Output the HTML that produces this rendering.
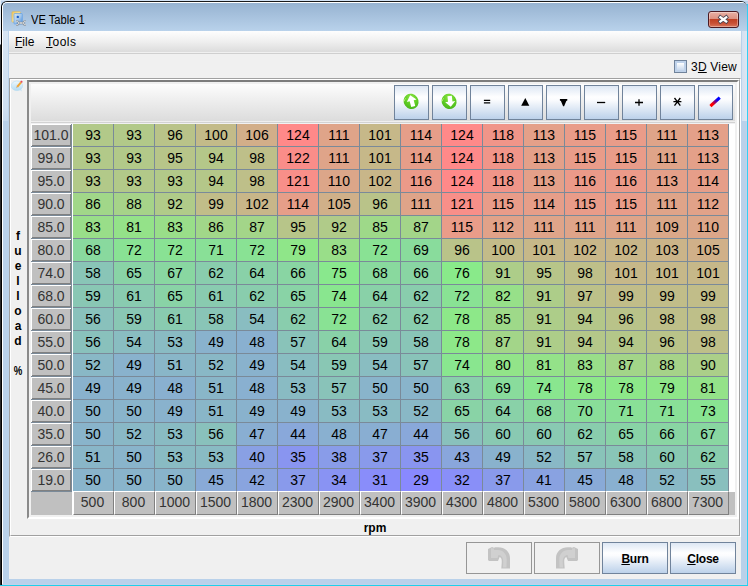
<!DOCTYPE html>
<html><head><meta charset="utf-8"><title>VE Table 1</title>
<style>
html,body{margin:0;padding:0}
body{width:748px;height:586px;overflow:hidden;position:relative;background:#b9d1ea;font-family:"Liberation Sans",sans-serif;font-size:12px;color:#000}
div,span,svg{position:absolute;box-sizing:border-box}
span.i{position:static}
/* outside strips */
#o-top{left:0;top:0;width:748px;height:1px;background:#d3e2f3}
#o-left{left:0;top:0;width:1px;height:586px;background:linear-gradient(#e8eef6 0,#e8eef6 44px,#2a2a2a 45px,#2a2a2a 100%)}
#o-right{left:747px;top:4px;width:1px;height:582px;background:#30d0f5}
#o-bot{left:0;top:585px;width:748px;height:1px;background:#1ed0ea}
/* window frame */
#win{left:1px;top:1px;width:746px;height:584px;border-left:1px solid #000;border-top:1px solid #1a1a1a;border-radius:6px 6px 0 0;background:#b9d1ea;overflow:hidden}
#title{left:0;top:0;width:746px;height:30px;background:linear-gradient(#97b3d1 0,#bad3ec 100%);border-left:1px solid #fff;border-top:1px solid #fff;border-radius:5px 5px 0 0}
#ttext{left:31px;top:12px;height:16px;line-height:16px;font-size:12px;white-space:nowrap;transform:scaleX(.93);transform-origin:0 0}
#xbtn{left:708px;top:11px;width:31px;height:17px;border:1px solid #4b1a22;border-radius:3px;background:linear-gradient(#e9b0a4 0,#dc9080 47%,#bf4024 50%,#c85035 75%,#d9755c 100%);box-shadow:inset 0 0 0 1px rgba(255,255,255,.35)}
/* client */
#client{left:9px;top:31px;width:732px;height:548px;background:#f0f0f0}
#menubar{left:9px;top:31px;width:732px;height:21px;background:linear-gradient(#fefefe 0,#efefef 50%,#dcdcdc 100%)}
#menuline{left:9px;top:53px;width:732px;height:1px;background:#cfcfcf}
.menu{top:34px;height:16px;line-height:16px;font-size:12px;white-space:nowrap}
u{text-decoration:underline;text-underline-offset:1px}
#cb{left:674px;top:60px;width:13px;height:13px;border:1px solid #70839b;background:#bfd2ea}
#cb i{position:absolute;left:2px;top:2px;width:7px;height:7px;background:linear-gradient(#fff 0,#f3f7fb 20%,#c9d9ed 100%)}
#cbl{left:691px;top:59px;letter-spacing:.2px;height:16px;line-height:16px;white-space:nowrap}
/* etched border */
#etch{left:9px;top:78px;width:732px;height:459px;border:1px solid #fff;border-top-color:#a0a0a0;border-left-color:#a0a0a0}
#etch2{left:10px;top:79px;width:730px;height:457px;border:1px solid #a0a0a0;border-top-color:#fff;border-left-color:#fff}
/* bevel */
#bevel{left:27px;top:80px;width:712px;height:439px;border-style:solid;border-width:2px;border-color:#7c7c7c #fff #fff #8a8a8a;background:#f0f0f0}
#inner{left:31px;top:84px;width:704px;height:431px;background:#fff}
#tb{left:31px;top:84px;width:704px;height:37px;background:linear-gradient(#fdfdfd 0,#ececec 50%,#dcdcdc 100%)}
#tb1{left:31px;top:121px;width:704px;height:1px;background:#efefef}
#tb2{left:31px;top:122px;width:704px;height:1px;background:#d2d2d2}
#tb3{left:31px;top:123px;width:704px;height:1px;background:#f1f1f3}
.tbtn{top:85px;width:35px;height:35px;border:1px solid #70839b;background:linear-gradient(#dde7f4 0,#fefeff 33%,#fbfcfe 42%,#bcd1ea 100%)}
.tbtn svg{left:0;top:0}
/* grid */
#grid{left:0;top:0;width:0;height:0}
.c{width:41px;height:23px;border-right:1px solid #7a8a99;border-bottom:1px solid #7a8a99;font-size:14px;line-height:22px;text-align:center;color:#000}
.rh{left:31px;width:41px;height:23px;background:#c0c0c0;border-right:1px solid #7a8a99;border-bottom:1px solid #7a8a99;box-shadow:inset 1px 1px 0 #fff,inset -1px -1px 0 #808080;font-size:14px;line-height:22px;text-align:center;color:#333}
.ch{top:491px;width:41px;height:24px;padding-right:2px;background:#c0c0c0;border:1px solid #808080;border-top-color:#fff;border-left-color:#fff;font-size:14px;line-height:21px;text-align:center;color:#333}
#corner{left:31px;top:492px;width:41px;height:23px;background:#c0c0c0}
#hdrbg{left:74px;top:492px;width:661px;height:23px;background:#c0c0c0}
#hdrtop{left:72px;top:491px;width:663px;height:1px;background:#fff}
#vlabel{left:10px;top:229px;width:16px;height:170px;writing-mode:vertical-rl;text-orientation:upright;font-weight:bold;font-size:12px;letter-spacing:1px;line-height:16px;white-space:pre}
#rpm{left:30px;top:520px;width:690px;height:16px;line-height:16px;text-align:center;font-weight:bold}
.bb{top:542px;width:66px;height:32px;border:1px solid #70839b;background:linear-gradient(#dde7f4 0,#fefeff 33%,#fbfcfe 42%,#bcd1ea 100%);text-align:center;font-weight:bold;line-height:32px;letter-spacing:-.2px}
.bbd{top:542px;width:66px;height:32px;border:1px solid #969696;background:#f0f0f0}
#hl-left{left:2px;top:6px;width:1px;height:579px;background:#fff}
#fr746{left:746px;top:31px;width:1px;height:554px;background:#c2d1ea}
#fb584{left:2px;top:584px;width:745px;height:1px;background:#c2d1ea}
#sh-l{left:3px;top:31px;width:5px;height:90px;background:linear-gradient(#d6e4f3 0,#cfdff0 85%,#c6d9ee 100%)}
#sh-r{left:742px;top:31px;width:5px;height:90px;background:linear-gradient(to right,#d3e1f2,#dde6f3)}

</style></head>
<body>
<div id="o-top"></div><div id="o-left"></div><div id="o-right"></div><div id="o-bot"></div>
<div id="win"><div id="title"></div></div><div id="hl-left"></div><div id="fr746"></div><div id="fb584"></div><div id="sh-l"></div><div id="sh-r"></div>
<svg id="ticon" style="left:11px;top:9px" width="17" height="18" viewBox="0 0 17 18">
 <defs><linearGradient id="ty" x1="0" y1="0" x2="1" y2="1"><stop offset="0" stop-color="#f1c85a"/><stop offset=".5" stop-color="#fbeab0"/><stop offset="1" stop-color="#f3d684"/></linearGradient>
 <linearGradient id="tb" x1="0" y1="0" x2="1" y2="1"><stop offset="0" stop-color="#d6e6f8"/><stop offset=".55" stop-color="#9cc4f0"/><stop offset="1" stop-color="#3f8ae0"/></linearGradient></defs>
 <rect x="1" y="2.8" width="8.3" height="10.2" rx=".6" fill="url(#ty)" stroke="#e3b84a" stroke-width=".7"/>
 <rect x="3" y="4.5" width="8.3" height="10.5" rx=".8" fill="url(#tb)" stroke="#5a9ce6" stroke-width=".7" opacity=".93"/>
 <circle cx="6.8" cy="7.9" r="1.2" fill="#1f5fc4"/>
<path d="M7.6 14h4.8" stroke="#868e97" stroke-width="2.5"/>
 <path d="M7.2 14h5.6" stroke="#e6e8ea" stroke-width="1.3"/>
 <path d="M5.3 12.3A1.8 1.8 0 1 1 5.3 15.7" fill="none" stroke="#7d858e" stroke-width="1.9"/>
 <path d="M5.3 12.3A1.8 1.8 0 1 1 5.3 15.7" fill="none" stroke="#eceef0" stroke-width=".9"/>
 <path d="M14.7 12.3A1.8 1.8 0 1 0 14.7 15.7" fill="none" stroke="#7d858e" stroke-width="1.9"/>
 <path d="M14.7 12.3A1.8 1.8 0 1 0 14.7 15.7" fill="none" stroke="#eceef0" stroke-width=".9"/>
</svg>
<div id="ttext">VE Table 1</div>
<div id="xbtn"><svg width="29" height="15" viewBox="0 0 29 15" style="left:0;top:0"><path d="M11.4 5.3l5.8 4.2M17.2 5.3l-5.8 4.2" stroke="#4a4452" stroke-width="3.9" stroke-linecap="square"/><path d="M11.4 5.3l5.8 4.2M17.2 5.3l-5.8 4.2" stroke="#fff" stroke-width="2.3" stroke-linecap="square"/></svg></div>
<div id="client"></div>
<div id="menubar"></div><div id="menuline"></div>
<div class="menu" style="left:15px"><u>F</u>ile</div>
<div class="menu" style="left:46px;letter-spacing:.5px"><u>T</u>ools</div>
<div id="cb"><i></i></div><div id="cbl">3<u>D</u> View</div>
<div id="etch"></div><div id="etch2"></div>
<svg id="nicon" style="left:11px;top:79px" width="15" height="15" viewBox="0 0 15 15">
 <defs><linearGradient id="nb" x1="0" y1="0" x2="0" y2="1"><stop offset="0" stop-color="#eef8fd"/><stop offset="1" stop-color="#b3dbf2"/></linearGradient></defs>
 <path d="M8.2 10.5l2.6 2-.6-2.6z" fill="#c5e3f5"/>
 <ellipse cx="5.9" cy="6.8" rx="5.7" ry="4.8" fill="url(#nb)" stroke="#b4dbf1" stroke-width=".6"/>
 <path d="M6.2 7.9l3.8-4.6" stroke="#f2a534" stroke-width="2.1"/>
 <path d="M5.4 8.9l.8-1" stroke="#b9b9b9" stroke-width="1.2"/>
 <path d="M10 3.3l1-1.2" stroke="#e8485a" stroke-width="2.1"/>
</svg>
<div id="bevel"></div><div id="inner"></div>
<div id="tb"></div><div id="tb1"></div><div id="tb2"></div><div id="tb3"></div>
<div id="corner"></div><div id="hdrbg"></div><div id="hdrtop"></div>
<div id="grid">
<div class="rh" style="top:124px">101.0</div>
<div class="rh" style="top:147px">99.0</div>
<div class="rh" style="top:170px">95.0</div>
<div class="rh" style="top:193px">90.0</div>
<div class="rh" style="top:216px">85.0</div>
<div class="rh" style="top:239px">80.0</div>
<div class="rh" style="top:262px">74.0</div>
<div class="rh" style="top:285px">68.0</div>
<div class="rh" style="top:308px">60.0</div>
<div class="rh" style="top:331px">55.0</div>
<div class="rh" style="top:354px">50.0</div>
<div class="rh" style="top:377px">45.0</div>
<div class="rh" style="top:400px">40.0</div>
<div class="rh" style="top:423px">35.0</div>
<div class="rh" style="top:446px">26.0</div>
<div class="rh" style="top:469px">19.0</div>
<div class="c" style="left:73px;top:124px;background:#b2c989">93</div>
<div class="c" style="left:114px;top:124px;background:#b2c989">93</div>
<div class="c" style="left:155px;top:124px;background:#b9c389">96</div>
<div class="c" style="left:196px;top:124px;background:#c3bb89">100</div>
<div class="c" style="left:237px;top:124px;background:#d2ae89">106</div>
<div class="c" style="left:278px;top:124px;background:#ff8989">124</div>
<div class="c" style="left:319px;top:124px;background:#dfa489">111</div>
<div class="c" style="left:360px;top:124px;background:#c6b889">101</div>
<div class="c" style="left:401px;top:124px;background:#e69e89">114</div>
<div class="c" style="left:442px;top:124px;background:#ff8989">124</div>
<div class="c" style="left:483px;top:124px;background:#f09589">118</div>
<div class="c" style="left:524px;top:124px;background:#e4a089">113</div>
<div class="c" style="left:565px;top:124px;background:#e99c89">115</div>
<div class="c" style="left:606px;top:124px;background:#e99c89">115</div>
<div class="c" style="left:647px;top:124px;background:#dfa489">111</div>
<div class="c" style="left:688px;top:124px;background:#e4a089">113</div>
<div class="c" style="left:73px;top:147px;background:#b2c989">93</div>
<div class="c" style="left:114px;top:147px;background:#b2c989">93</div>
<div class="c" style="left:155px;top:147px;background:#b7c589">95</div>
<div class="c" style="left:196px;top:147px;background:#b4c789">94</div>
<div class="c" style="left:237px;top:147px;background:#bebf89">98</div>
<div class="c" style="left:278px;top:147px;background:#fa8d89">122</div>
<div class="c" style="left:319px;top:147px;background:#dfa489">111</div>
<div class="c" style="left:360px;top:147px;background:#c6b889">101</div>
<div class="c" style="left:401px;top:147px;background:#e69e89">114</div>
<div class="c" style="left:442px;top:147px;background:#ff8989">124</div>
<div class="c" style="left:483px;top:147px;background:#f09589">118</div>
<div class="c" style="left:524px;top:147px;background:#e4a089">113</div>
<div class="c" style="left:565px;top:147px;background:#e99c89">115</div>
<div class="c" style="left:606px;top:147px;background:#e99c89">115</div>
<div class="c" style="left:647px;top:147px;background:#dfa489">111</div>
<div class="c" style="left:688px;top:147px;background:#e4a089">113</div>
<div class="c" style="left:73px;top:170px;background:#b2c989">93</div>
<div class="c" style="left:114px;top:170px;background:#b2c989">93</div>
<div class="c" style="left:155px;top:170px;background:#b2c989">93</div>
<div class="c" style="left:196px;top:170px;background:#b4c789">94</div>
<div class="c" style="left:237px;top:170px;background:#bebf89">98</div>
<div class="c" style="left:278px;top:170px;background:#f88f89">121</div>
<div class="c" style="left:319px;top:170px;background:#dca689">110</div>
<div class="c" style="left:360px;top:170px;background:#c8b689">102</div>
<div class="c" style="left:401px;top:170px;background:#eb9a89">116</div>
<div class="c" style="left:442px;top:170px;background:#ff8989">124</div>
<div class="c" style="left:483px;top:170px;background:#f09589">118</div>
<div class="c" style="left:524px;top:170px;background:#e4a089">113</div>
<div class="c" style="left:565px;top:170px;background:#eb9a89">116</div>
<div class="c" style="left:606px;top:170px;background:#eb9a89">116</div>
<div class="c" style="left:647px;top:170px;background:#e4a089">113</div>
<div class="c" style="left:688px;top:170px;background:#e69e89">114</div>
<div class="c" style="left:73px;top:193px;background:#a1d789">86</div>
<div class="c" style="left:114px;top:193px;background:#a6d389">88</div>
<div class="c" style="left:155px;top:193px;background:#b0cb89">92</div>
<div class="c" style="left:196px;top:193px;background:#c1bd89">99</div>
<div class="c" style="left:237px;top:193px;background:#c8b689">102</div>
<div class="c" style="left:278px;top:193px;background:#e69e89">114</div>
<div class="c" style="left:319px;top:193px;background:#d0b089">105</div>
<div class="c" style="left:360px;top:193px;background:#b9c389">96</div>
<div class="c" style="left:401px;top:193px;background:#dfa489">111</div>
<div class="c" style="left:442px;top:193px;background:#f88f89">121</div>
<div class="c" style="left:483px;top:193px;background:#e99c89">115</div>
<div class="c" style="left:524px;top:193px;background:#e69e89">114</div>
<div class="c" style="left:565px;top:193px;background:#e99c89">115</div>
<div class="c" style="left:606px;top:193px;background:#e99c89">115</div>
<div class="c" style="left:647px;top:193px;background:#dfa489">111</div>
<div class="c" style="left:688px;top:193px;background:#e1a289">112</div>
<div class="c" style="left:73px;top:216px;background:#99de89">83</div>
<div class="c" style="left:114px;top:216px;background:#94e289">81</div>
<div class="c" style="left:155px;top:216px;background:#99de89">83</div>
<div class="c" style="left:196px;top:216px;background:#a1d789">86</div>
<div class="c" style="left:237px;top:216px;background:#a3d589">87</div>
<div class="c" style="left:278px;top:216px;background:#b7c589">95</div>
<div class="c" style="left:319px;top:216px;background:#b0cb89">92</div>
<div class="c" style="left:360px;top:216px;background:#9ed989">85</div>
<div class="c" style="left:401px;top:216px;background:#a3d589">87</div>
<div class="c" style="left:442px;top:216px;background:#e99c89">115</div>
<div class="c" style="left:483px;top:216px;background:#e1a289">112</div>
<div class="c" style="left:524px;top:216px;background:#dfa489">111</div>
<div class="c" style="left:565px;top:216px;background:#dfa489">111</div>
<div class="c" style="left:606px;top:216px;background:#dfa489">111</div>
<div class="c" style="left:647px;top:216px;background:#daa889">109</div>
<div class="c" style="left:688px;top:216px;background:#dca689">110</div>
<div class="c" style="left:73px;top:239px;background:#89d99e">68</div>
<div class="c" style="left:114px;top:239px;background:#89e294">72</div>
<div class="c" style="left:155px;top:239px;background:#89e294">72</div>
<div class="c" style="left:196px;top:239px;background:#89e097">71</div>
<div class="c" style="left:237px;top:239px;background:#89e294">72</div>
<div class="c" style="left:278px;top:239px;background:#8fe689">79</div>
<div class="c" style="left:319px;top:239px;background:#99de89">83</div>
<div class="c" style="left:360px;top:239px;background:#89e294">72</div>
<div class="c" style="left:401px;top:239px;background:#89dc9c">69</div>
<div class="c" style="left:442px;top:239px;background:#b9c389">96</div>
<div class="c" style="left:483px;top:239px;background:#c3bb89">100</div>
<div class="c" style="left:524px;top:239px;background:#c6b889">101</div>
<div class="c" style="left:565px;top:239px;background:#c8b689">102</div>
<div class="c" style="left:606px;top:239px;background:#c8b689">102</div>
<div class="c" style="left:647px;top:239px;background:#cbb489">103</div>
<div class="c" style="left:688px;top:239px;background:#d0b089">105</div>
<div class="c" style="left:73px;top:262px;background:#89c5b7">58</div>
<div class="c" style="left:114px;top:262px;background:#89d3a6">65</div>
<div class="c" style="left:155px;top:262px;background:#89d7a1">67</div>
<div class="c" style="left:196px;top:262px;background:#89cdad">62</div>
<div class="c" style="left:237px;top:262px;background:#89d1a8">64</div>
<div class="c" style="left:278px;top:262px;background:#89d5a3">66</div>
<div class="c" style="left:319px;top:262px;background:#89e88d">75</div>
<div class="c" style="left:360px;top:262px;background:#89d99e">68</div>
<div class="c" style="left:401px;top:262px;background:#89d5a3">66</div>
<div class="c" style="left:442px;top:262px;background:#89ea8a">76</div>
<div class="c" style="left:483px;top:262px;background:#adcd89">91</div>
<div class="c" style="left:524px;top:262px;background:#b7c589">95</div>
<div class="c" style="left:565px;top:262px;background:#bebf89">98</div>
<div class="c" style="left:606px;top:262px;background:#c6b889">101</div>
<div class="c" style="left:647px;top:262px;background:#c6b889">101</div>
<div class="c" style="left:688px;top:262px;background:#c6b889">101</div>
<div class="c" style="left:73px;top:285px;background:#89c7b4">59</div>
<div class="c" style="left:114px;top:285px;background:#89cbb0">61</div>
<div class="c" style="left:155px;top:285px;background:#89d3a6">65</div>
<div class="c" style="left:196px;top:285px;background:#89cbb0">61</div>
<div class="c" style="left:237px;top:285px;background:#89cdad">62</div>
<div class="c" style="left:278px;top:285px;background:#89d3a6">65</div>
<div class="c" style="left:319px;top:285px;background:#89e68f">74</div>
<div class="c" style="left:360px;top:285px;background:#89d1a8">64</div>
<div class="c" style="left:401px;top:285px;background:#89cdad">62</div>
<div class="c" style="left:442px;top:285px;background:#89e294">72</div>
<div class="c" style="left:483px;top:285px;background:#97e089">82</div>
<div class="c" style="left:524px;top:285px;background:#adcd89">91</div>
<div class="c" style="left:565px;top:285px;background:#bcc189">97</div>
<div class="c" style="left:606px;top:285px;background:#c1bd89">99</div>
<div class="c" style="left:647px;top:285px;background:#c1bd89">99</div>
<div class="c" style="left:688px;top:285px;background:#c1bd89">99</div>
<div class="c" style="left:73px;top:308px;background:#89c1bc">56</div>
<div class="c" style="left:114px;top:308px;background:#89c7b4">59</div>
<div class="c" style="left:155px;top:308px;background:#89cbb0">61</div>
<div class="c" style="left:196px;top:308px;background:#89c5b7">58</div>
<div class="c" style="left:237px;top:308px;background:#89bdc1">54</div>
<div class="c" style="left:278px;top:308px;background:#89cdad">62</div>
<div class="c" style="left:319px;top:308px;background:#89e294">72</div>
<div class="c" style="left:360px;top:308px;background:#89cdad">62</div>
<div class="c" style="left:401px;top:308px;background:#89cdad">62</div>
<div class="c" style="left:442px;top:308px;background:#8de889">78</div>
<div class="c" style="left:483px;top:308px;background:#9ed989">85</div>
<div class="c" style="left:524px;top:308px;background:#adcd89">91</div>
<div class="c" style="left:565px;top:308px;background:#b4c789">94</div>
<div class="c" style="left:606px;top:308px;background:#b9c389">96</div>
<div class="c" style="left:647px;top:308px;background:#bebf89">98</div>
<div class="c" style="left:688px;top:308px;background:#bebf89">98</div>
<div class="c" style="left:73px;top:331px;background:#89c1bc">56</div>
<div class="c" style="left:114px;top:331px;background:#89bdc1">54</div>
<div class="c" style="left:155px;top:331px;background:#89bbc3">53</div>
<div class="c" style="left:196px;top:331px;background:#89b2cd">49</div>
<div class="c" style="left:237px;top:331px;background:#89b0d0">48</div>
<div class="c" style="left:278px;top:331px;background:#89c3b9">57</div>
<div class="c" style="left:319px;top:331px;background:#89d1a8">64</div>
<div class="c" style="left:360px;top:331px;background:#89c7b4">59</div>
<div class="c" style="left:401px;top:331px;background:#89c5b7">58</div>
<div class="c" style="left:442px;top:331px;background:#8de889">78</div>
<div class="c" style="left:483px;top:331px;background:#a3d589">87</div>
<div class="c" style="left:524px;top:331px;background:#adcd89">91</div>
<div class="c" style="left:565px;top:331px;background:#b4c789">94</div>
<div class="c" style="left:606px;top:331px;background:#b4c789">94</div>
<div class="c" style="left:647px;top:331px;background:#b9c389">96</div>
<div class="c" style="left:688px;top:331px;background:#bebf89">98</div>
<div class="c" style="left:73px;top:354px;background:#89b8c6">52</div>
<div class="c" style="left:114px;top:354px;background:#89b2cd">49</div>
<div class="c" style="left:155px;top:354px;background:#89b6c8">51</div>
<div class="c" style="left:196px;top:354px;background:#89b8c6">52</div>
<div class="c" style="left:237px;top:354px;background:#89b2cd">49</div>
<div class="c" style="left:278px;top:354px;background:#89bdc1">54</div>
<div class="c" style="left:319px;top:354px;background:#89c7b4">59</div>
<div class="c" style="left:360px;top:354px;background:#89bdc1">54</div>
<div class="c" style="left:401px;top:354px;background:#89c3b9">57</div>
<div class="c" style="left:442px;top:354px;background:#89e68f">74</div>
<div class="c" style="left:483px;top:354px;background:#92e489">80</div>
<div class="c" style="left:524px;top:354px;background:#94e289">81</div>
<div class="c" style="left:565px;top:354px;background:#99de89">83</div>
<div class="c" style="left:606px;top:354px;background:#a3d589">87</div>
<div class="c" style="left:647px;top:354px;background:#a6d389">88</div>
<div class="c" style="left:688px;top:354px;background:#abcf89">90</div>
<div class="c" style="left:73px;top:377px;background:#89b2cd">49</div>
<div class="c" style="left:114px;top:377px;background:#89b2cd">49</div>
<div class="c" style="left:155px;top:377px;background:#89b0d0">48</div>
<div class="c" style="left:196px;top:377px;background:#89b6c8">51</div>
<div class="c" style="left:237px;top:377px;background:#89b0d0">48</div>
<div class="c" style="left:278px;top:377px;background:#89bbc3">53</div>
<div class="c" style="left:319px;top:377px;background:#89c3b9">57</div>
<div class="c" style="left:360px;top:377px;background:#89b4cb">50</div>
<div class="c" style="left:401px;top:377px;background:#89b4cb">50</div>
<div class="c" style="left:442px;top:377px;background:#89cfab">63</div>
<div class="c" style="left:483px;top:377px;background:#89dc9c">69</div>
<div class="c" style="left:524px;top:377px;background:#89e68f">74</div>
<div class="c" style="left:565px;top:377px;background:#8de889">78</div>
<div class="c" style="left:606px;top:377px;background:#8de889">78</div>
<div class="c" style="left:647px;top:377px;background:#8fe689">79</div>
<div class="c" style="left:688px;top:377px;background:#94e289">81</div>
<div class="c" style="left:73px;top:400px;background:#89b4cb">50</div>
<div class="c" style="left:114px;top:400px;background:#89b4cb">50</div>
<div class="c" style="left:155px;top:400px;background:#89b2cd">49</div>
<div class="c" style="left:196px;top:400px;background:#89b6c8">51</div>
<div class="c" style="left:237px;top:400px;background:#89b2cd">49</div>
<div class="c" style="left:278px;top:400px;background:#89b2cd">49</div>
<div class="c" style="left:319px;top:400px;background:#89bbc3">53</div>
<div class="c" style="left:360px;top:400px;background:#89bbc3">53</div>
<div class="c" style="left:401px;top:400px;background:#89b8c6">52</div>
<div class="c" style="left:442px;top:400px;background:#89d3a6">65</div>
<div class="c" style="left:483px;top:400px;background:#89d1a8">64</div>
<div class="c" style="left:524px;top:400px;background:#89d99e">68</div>
<div class="c" style="left:565px;top:400px;background:#89de99">70</div>
<div class="c" style="left:606px;top:400px;background:#89e097">71</div>
<div class="c" style="left:647px;top:400px;background:#89e097">71</div>
<div class="c" style="left:688px;top:400px;background:#89e492">73</div>
<div class="c" style="left:73px;top:423px;background:#89b4cb">50</div>
<div class="c" style="left:114px;top:423px;background:#89b8c6">52</div>
<div class="c" style="left:155px;top:423px;background:#89bbc3">53</div>
<div class="c" style="left:196px;top:423px;background:#89c1bc">56</div>
<div class="c" style="left:237px;top:423px;background:#89aed2">47</div>
<div class="c" style="left:278px;top:423px;background:#89a8da">44</div>
<div class="c" style="left:319px;top:423px;background:#89b0d0">48</div>
<div class="c" style="left:360px;top:423px;background:#89aed2">47</div>
<div class="c" style="left:401px;top:423px;background:#89a8da">44</div>
<div class="c" style="left:442px;top:423px;background:#89c1bc">56</div>
<div class="c" style="left:483px;top:423px;background:#89c9b2">60</div>
<div class="c" style="left:524px;top:423px;background:#89c9b2">60</div>
<div class="c" style="left:565px;top:423px;background:#89cdad">62</div>
<div class="c" style="left:606px;top:423px;background:#89d3a6">65</div>
<div class="c" style="left:647px;top:423px;background:#89d5a3">66</div>
<div class="c" style="left:688px;top:423px;background:#89d7a1">67</div>
<div class="c" style="left:73px;top:446px;background:#89b6c8">51</div>
<div class="c" style="left:114px;top:446px;background:#89b4cb">50</div>
<div class="c" style="left:155px;top:446px;background:#89bbc3">53</div>
<div class="c" style="left:196px;top:446px;background:#89bbc3">53</div>
<div class="c" style="left:237px;top:446px;background:#89a0e4">40</div>
<div class="c" style="left:278px;top:446px;background:#8995f0">35</div>
<div class="c" style="left:319px;top:446px;background:#899ce9">38</div>
<div class="c" style="left:360px;top:446px;background:#899aeb">37</div>
<div class="c" style="left:401px;top:446px;background:#8995f0">35</div>
<div class="c" style="left:442px;top:446px;background:#89a6dc">43</div>
<div class="c" style="left:483px;top:446px;background:#89b2cd">49</div>
<div class="c" style="left:524px;top:446px;background:#89b8c6">52</div>
<div class="c" style="left:565px;top:446px;background:#89c3b9">57</div>
<div class="c" style="left:606px;top:446px;background:#89c5b7">58</div>
<div class="c" style="left:647px;top:446px;background:#89c9b2">60</div>
<div class="c" style="left:688px;top:446px;background:#89cdad">62</div>
<div class="c" style="left:73px;top:469px;background:#89b4cb">50</div>
<div class="c" style="left:114px;top:469px;background:#89b4cb">50</div>
<div class="c" style="left:155px;top:469px;background:#89b4cb">50</div>
<div class="c" style="left:196px;top:469px;background:#89aad7">45</div>
<div class="c" style="left:237px;top:469px;background:#89a4df">42</div>
<div class="c" style="left:278px;top:469px;background:#899aeb">37</div>
<div class="c" style="left:319px;top:469px;background:#8993f3">34</div>
<div class="c" style="left:360px;top:469px;background:#898dfa">31</div>
<div class="c" style="left:401px;top:469px;background:#8989ff">29</div>
<div class="c" style="left:442px;top:469px;background:#898ff8">32</div>
<div class="c" style="left:483px;top:469px;background:#899aeb">37</div>
<div class="c" style="left:524px;top:469px;background:#89a2e1">41</div>
<div class="c" style="left:565px;top:469px;background:#89aad7">45</div>
<div class="c" style="left:606px;top:469px;background:#89b0d0">48</div>
<div class="c" style="left:647px;top:469px;background:#89b8c6">52</div>
<div class="c" style="left:688px;top:469px;background:#89bfbe">55</div>
<div class="ch" style="left:73px">500</div>
<div class="ch" style="left:114px">800</div>
<div class="ch" style="left:155px">1000</div>
<div class="ch" style="left:196px">1500</div>
<div class="ch" style="left:237px">1800</div>
<div class="ch" style="left:278px">2300</div>
<div class="ch" style="left:319px">2900</div>
<div class="ch" style="left:360px">3400</div>
<div class="ch" style="left:401px">3900</div>
<div class="ch" style="left:442px">4300</div>
<div class="ch" style="left:483px">4800</div>
<div class="ch" style="left:524px">5300</div>
<div class="ch" style="left:565px">5800</div>
<div class="ch" style="left:606px">6300</div>
<div class="ch" style="left:647px">6800</div>
<div class="ch" style="left:688px">7300</div>
</div>
<div class="tbtn" style="left:394px"><svg width="33" height="33" viewBox="0 0 33 33"><defs><radialGradient id="g1" cx=".3" cy=".35" r=".85"><stop offset="0" stop-color="#8fe447"/><stop offset=".5" stop-color="#5fce25"/><stop offset=".85" stop-color="#4cb81c"/><stop offset="1" stop-color="#3f9a1c"/></radialGradient></defs><ellipse cx="16.1" cy="15.4" rx="7.9" ry="7.3" fill="url(#g1)" transform="rotate(55 16.1 15.4)"/><path d="M2.6 8.3a7 7 0 0 1 1.5-3" fill="none" stroke="#b4f06c" stroke-width="1" transform="translate(6.5 7)"/><path d="M0-5.6L4.6-.4H1.9V5H-1.9V-.4H-4.6z" fill="#fff" transform="translate(16.8 15.2) rotate(-15) scale(1.1)"/></svg></div>
<div class="tbtn" style="left:432px"><svg width="33" height="33" viewBox="0 0 33 33"><ellipse cx="16.1" cy="15.4" rx="7.9" ry="7.3" fill="url(#g1)" transform="rotate(55 16.1 15.4)"/><path d="M2.6 8.3a7 7 0 0 1 1.5-3" fill="none" stroke="#b4f06c" stroke-width="1" transform="translate(6.5 7)"/><path d="M0 5L4.6.3H2V-4.9H-2V.3H-4.6z" fill="#fff" transform="translate(17.2 15.3) rotate(-6) scale(1.1)"/></svg></div>
<div class="tbtn" style="left:470px"><svg width="33" height="33" viewBox="0 0 33 33"><path d="M12.9 14.4h6.3M12.9 16.9h6.3" stroke="#000" stroke-width="1.25"/></svg></div>
<div class="tbtn" style="left:508px"><svg width="33" height="33" viewBox="0 0 33 33"><path d="M16.3 11.9L20.3 19.7H12.2z" fill="#000"/></svg></div>
<div class="tbtn" style="left:546px"><svg width="33" height="33" viewBox="0 0 33 33"><path d="M12.9 13H20.3V14.4L19.3 14.9L17.1 20.2H16.1L13.9 14.9L12.9 14.4z" fill="#000"/></svg></div>
<div class="tbtn" style="left:584px"><svg width="33" height="33" viewBox="0 0 33 33"><path d="M12 16.5h8.2" stroke="#000" stroke-width="1.3"/></svg></div>
<div class="tbtn" style="left:622px"><svg width="33" height="33" viewBox="0 0 33 33"><path d="M12 16.5h8M16 13.2v6.6" stroke="#000" stroke-width="1.3"/></svg></div>
<div class="tbtn" style="left:660px"><svg width="33" height="33" viewBox="0 0 33 33"><path d="M12.4 15.6h8M13.5 12l5.8 7.6M19.3 12l-5.8 7.6" stroke="#000" stroke-width="1.3"/></svg></div>
<div class="tbtn" style="left:698px"><svg width="33" height="33" viewBox="0 0 33 33"><defs><linearGradient id="g2" x1="0" y1="1" x2="1" y2="0"><stop offset=".15" stop-color="#ff0000"/><stop offset=".85" stop-color="#0000ff"/></linearGradient></defs><path d="M12.6 19L19.6 12.6" stroke="url(#g2)" stroke-width="3.1" stroke-linecap="square"/></svg></div>
<div id="vlabel">fuelload <span class="i" style="display:inline-block;transform:scaleX(.8)">%</span></div>
<div id="rpm">rpm</div>
<div class="bbd" style="left:466px"><svg width="64" height="30" viewBox="0 0 64 30" style="left:0;top:0"><path d="M43 25.5 L43 15 C43 9 38 4.3 31 4.3 L27.5 4.3 L27.5 5 L25 4 L21 6 L21 17 L22 18 L31 18 L32.7 14 C34.5 14.5 35 16.5 34.7 20 L34.3 25.5 Z" fill="#c3c3c3"/><path d="M39.5 24.5 L39.7 16 C39.5 11 36 7.2 31 7 L27 7 L27 5.6 L24 5 L24 15 L30.5 15 L31.5 12 C35.5 12.5 36.5 16 36.2 20 L36 24.5 Z" fill="#d0d0d0"/></svg></div>
<div class="bbd" style="left:534px"><svg width="64" height="30" viewBox="0 0 64 30" style="left:0;top:0"><path d="M21 25.5L21 15C21 9 26 4.3 33 4.3L36.5 4.3L36.5 5L39 4L43 6L43 17L42 18L33 18L31.3 14C29.5 14.5 29 16.5 29.3 20L29.7 25.5Z" fill="#c3c3c3"/><path d="M24.5 24.5L24.3 16C24.5 11 28 7.2 33 7L37 7L37 5.6L40 5L40 15L33.5 15L32.5 12C28.5 12.5 27.5 16 27.8 20L28 24.5Z" fill="#d0d0d0"/></svg></div>
<div class="bb" style="left:602px"><u>B</u>urn</div>
<div class="bb" style="left:670px"><u>C</u>lose</div>

</body></html>
